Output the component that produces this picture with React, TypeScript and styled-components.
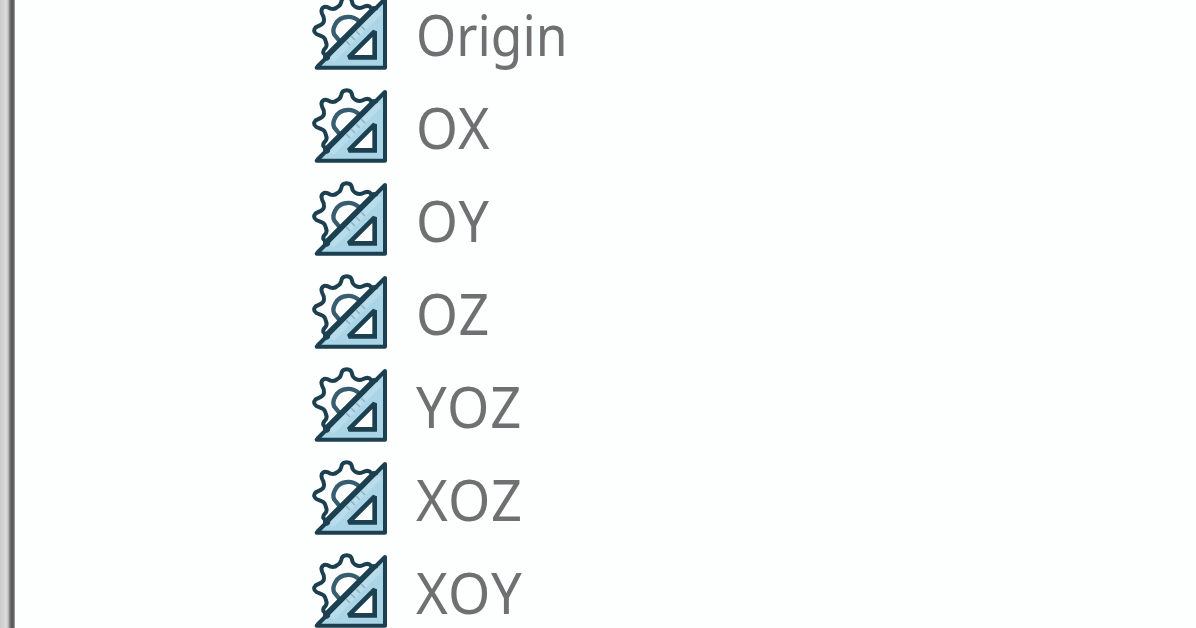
import React from 'react';
import styled, { createGlobalStyle } from 'styled-components';

const GlobalStyle = createGlobalStyle`
  body { margin: 0; background: #fdfefe; overflow: hidden; }
`;

const Panel = styled.div`
  display: flex;
  width: 1196px;
  height: 628px;
  overflow: hidden;
  background: #fdfefe;
`;

const Splitter = styled.div`
  box-sizing: border-box;
  flex: none;
  width: 15px;
  background: linear-gradient(90deg, #cacaca 0, #dcdcdc 6px, #c4c4c4 8px, #777 10px, #555 12px, #6a6a6a 14px, #c5c5c5 15px);
`;

const Tree = styled.ul`
  list-style: none;
  margin: -10px 0 0;
  padding: 0 0 0 295px;
`;

const Row = styled.li`
  display: flex;
  align-items: flex-start;
  height: 93px;
`;

const Icon = styled.svg`
  display: block;
  flex: none;
  width: 80px;
  height: 80px;
  margin-top: 2px;
`;

const Label = styled.span<{ $stretch: number; $spacing: number }>`
  display: block;
  margin: 14px 0 0 25.5px;
  font: 400 56px/60px 'Noto Sans', 'Open Sans', sans-serif;
  letter-spacing: ${(p) => p.$spacing}px;
  color: #707072;
  white-space: nowrap;
  transform: scaleX(${(p) => p.$stretch});
  transform-origin: left;
`;

const items = [
  { name: 'Origin', stretch: 0.92, spacing: 0 },
  { name: 'OX', stretch: 0.96, spacing: 1.2 },
  { name: 'OY', stretch: 0.96, spacing: 1.2 },
  { name: 'OZ', stretch: 0.96, spacing: 1.2 },
  { name: 'YOZ', stretch: 0.97, spacing: 1.4 },
  { name: 'XOZ', stretch: 0.97, spacing: 1.2 },
  { name: 'XOY', stretch: 0.97, spacing: 1.2 },
];

const GearSquareIcon = () => (
  <Icon viewBox="30 15 240 240" fill="none" stroke="#1d4050" strokeWidth="12" strokeLinejoin="round">
    <path
      d="M84 214 L70 198 Q68 190 77 182 Q82 176 78 166 Q75 151 66 148 L49 141 Q37 132 47 121 L64 113 Q72 108 72 100 Q73 92 67 82 Q61 68 69 62 Q76 56 92 65 Q104 68 112 60 Q121 56 124 44 Q126 31 140 31 Q154 31 156 44 Q157 54 166 59 Q178 66 188 61 Q205 52 213 62 Q218 70 211 86"
      fill="#fdfefe"
    />
    <path d="M122 166 L103 143 Q96 130 106 112 Q118 91 141 90 Q160 88 180 104" stroke="#365d70" strokeWidth="13" />
    <path d="M255 36 L255 242 L50 242 Z" fill="#a9d5e6" />
    <path d="M50 237 L250 38" strokeWidth="6" />
    <path d="M80 210 L222 68" strokeWidth="21" strokeLinecap="round" />
    <path d="M100 213 L234 79" strokeWidth="19" stroke="#b9dcea" strokeLinecap="round" />
    <path d="M138 162 L150 174 M153 147 L165 159 M168 132 L180 144 M183 117 L195 129" strokeWidth="5" stroke="#8db4c5" />
    <path d="M224 133 V211 H146 Z" fill="#fdfefe" strokeWidth="14" strokeLinejoin="miter" strokeMiterlimit="2" />
  </Icon>
);

export default function App() {
  return (
    <>
      <GlobalStyle />
      <Panel>
        <Splitter />
        <Tree>
          {items.map((item) => (
            <Row key={item.name}>
              <GearSquareIcon />
              <Label $stretch={item.stretch} $spacing={item.spacing}>{item.name}</Label>
            </Row>
          ))}
        </Tree>
      </Panel>
    </>
  );
}
